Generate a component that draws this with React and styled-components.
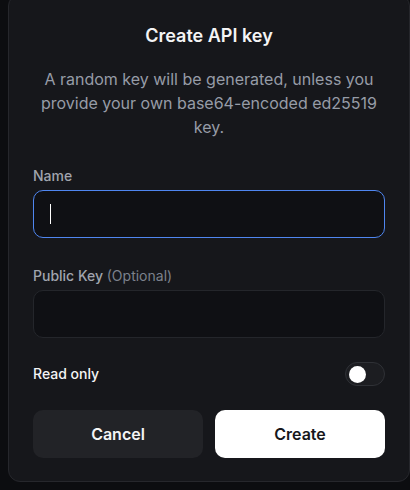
import styled, { createGlobalStyle } from "styled-components";

const GlobalStyle = createGlobalStyle`
  html, body {
    margin: 0;
    padding: 0;
    background: #0c0d10;
    overflow: hidden;
  }
  body {
    font-family: Inter, "Noto Sans", sans-serif;
    -webkit-font-smoothing: antialiased;
  }
`;

const Page = styled.div`
  width: 410px;
  height: 490px;
  padding-left: 8px;
  box-sizing: border-box;
`;

const Dialog = styled.div`
  margin-top: -6px;
  width: 402px;
  box-sizing: border-box;
  background: #16171b;
  border: 1px solid #26272c;
  border-radius: 12px;
  padding: 27px 24px 23px 24px;
  display: flex;
  flex-direction: column;
`;

const Title = styled.h2`
  margin: 0;
  text-align: center;
  color: #f4f4f5;
  font-size: 18px;
  line-height: 28px;
  font-weight: 600;
`;

const Description = styled.p`
  margin: 17px 0 0;
  text-align: center;
  color: #969ca7;
  font-size: 16px;
  line-height: 24px;
  font-weight: 400;
`;

const Field = styled.div`
  display: flex;
  flex-direction: column;
  gap: 4px;
  margin-top: ${(p) => p.$top}px;
`;

const Label = styled.label`
  color: #a1a5ae;
  font-size: 14px;
  line-height: 20px;
  font-weight: 500;
`;

const Optional = styled.span`
  color: #7c818c;
  font-weight: 400;
`;

const InputWrap = styled.div`
  position: relative;
`;

const Input = styled.input`
  display: block;
  height: 48px;
  box-sizing: border-box;
  width: 100%;
  background: #0f1014;
  border: 1px solid ${(p) => (p.$focused ? "#4f86f0" : "#24262b")};
  border-radius: 10px;
  padding: 0 16px;
  color: #f4f4f5;
  font-family: inherit;
  font-size: 15px;
  outline: none;
  caret-color: transparent;
`;

const Caret = styled.span`
  position: absolute;
  left: 17px;
  top: 14px;
  width: 1px;
  height: 20px;
  background: #ffffff;
  pointer-events: none;
`;

const ToggleRow = styled.div`
  margin-top: 24px;
  display: flex;
  align-items: center;
  justify-content: space-between;
`;

const ToggleLabel = styled.span`
  color: #f4f4f5;
  font-size: 14px;
  line-height: 20px;
  font-weight: 500;
`;

const Switch = styled.div`
  width: 40px;
  height: 24px;
  box-sizing: border-box;
  border-radius: 12px;
  background: #1c1d21;
  border: 1px solid #2f3136;
  padding: 2px 3px;
  display: flex;
  align-items: center;
`;

const Knob = styled.div`
  width: 17px;
  height: 17px;
  border-radius: 50%;
  background: #ffffff;
`;

const Actions = styled.div`
  margin-top: 24px;
  display: grid;
  grid-template-columns: 1fr 1fr;
  gap: 12px;
`;

const Button = styled.button`
  height: 48px;
  border-radius: 10px;
  border: none;
  font-family: inherit;
  font-size: 16px;
  font-weight: 600;
  background: ${(p) => (p.$primary ? "#ffffff" : "#222327")};
  color: ${(p) => (p.$primary ? "#16171b" : "#f4f4f5")};
  cursor: pointer;
`;

export default function App() {
  return (
    <Page>
      <GlobalStyle />
      <Dialog>
        <Title>Create API key</Title>
        <Description>
          A random key will be generated, unless you provide your own
          base64-encoded ed25519 key.
        </Description>
        <Field $top={27}>
          <Label>Name</Label>
          <InputWrap>
            <Input $focused />
            <Caret />
          </InputWrap>
        </Field>
        <Field $top={28}>
          <Label>
            Public Key <Optional>(Optional)</Optional>
          </Label>
          <Input />
        </Field>
        <ToggleRow>
          <ToggleLabel>Read only</ToggleLabel>
          <Switch>
            <Knob />
          </Switch>
        </ToggleRow>
        <Actions>
          <Button>Cancel</Button>
          <Button $primary>Create</Button>
        </Actions>
      </Dialog>
    </Page>
  );
}
